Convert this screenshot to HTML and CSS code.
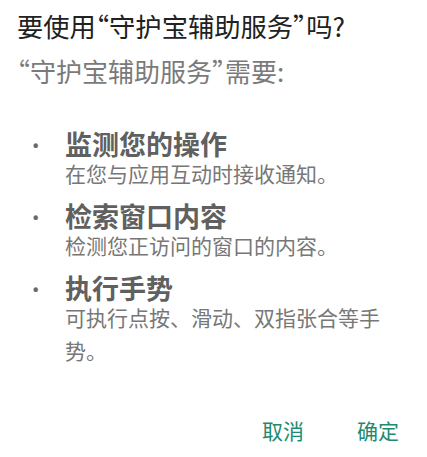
FILE: index.html
```html
<!DOCTYPE html>
<html lang="zh-CN">
<head>
<meta charset="utf-8">
<link rel="stylesheet" href="styles.css">
</head>
<body>
<div class="dialog">
  <h1 class="title">要使用“守护宝辅助服务”吗?</h1>
  <p class="subtitle">“守护宝辅助服务”需要:</p>
  <ul class="perms">
    <li class="perm">
      <span class="dot">•</span>
      <div class="perm-text">
        <div class="perm-head">监测您的操作</div>
        <div class="perm-desc">在您与应用互动时接收通知。</div>
      </div>
    </li>
    <li class="perm">
      <span class="dot">•</span>
      <div class="perm-text">
        <div class="perm-head">检索窗口内容</div>
        <div class="perm-desc">检测您正访问的窗口的内容。</div>
      </div>
    </li>
    <li class="perm">
      <span class="dot">•</span>
      <div class="perm-text">
        <div class="perm-head">执行手势</div>
        <div class="perm-desc">可执行点按、滑动、双指张合等手势。</div>
      </div>
    </li>
  </ul>
  <div class="actions">
    <button class="btn">取消</button>
    <button class="btn">确定</button>
  </div>
</div>
</body>
</html>
```

FILE: styles.css
```css
html, body {
  margin: 0;
  padding: 0;
  background: #ffffff;
}
body {
  font-family: "Noto Sans CJK SC", sans-serif;
  width: 427px;
  height: 457px;
  overflow: hidden;
}
.dialog {
  padding: 9px 37px 0 17px;
  display: flex;
  flex-direction: column;
}
.title {
  margin: 0;
  font-size: 26.3px;
  line-height: 34px;
  font-weight: 400;
  color: #212121;
  white-space: nowrap;
  font-feature-settings: "halt" 1;
}
.subtitle {
  margin: 13px 0 0;
  font-size: 26px;
  line-height: 30px;
  color: #7a7a7a;
  white-space: nowrap;
  font-feature-settings: "halt" 1;
}
.perms {
  list-style: none;
  margin: 47.5px 0 0;
  padding: 0;
  display: flex;
  flex-direction: column;
  gap: 14px;
}
.perm {
  display: flex;
}
.dot {
  width: 48px;
  flex: none;
  padding-left: 15px;
  box-sizing: border-box;
  font-family: Roboto, sans-serif;
  font-size: 22px;
  line-height: 25px;
  color: #6a6a6a;
}
.perm-text {
  flex: 1;
  min-width: 0;
  font-family: Roboto, "Noto Sans CJK SC", sans-serif;
}
.perm-head {
  font-size: 27px;
  line-height: 25px;
  font-weight: 700;
  color: #606060;
}
.perm-desc {
  font-size: 21px;
  line-height: 33px;
  color: #777777;
}
.actions {
  margin: 49.5px -9px 0 0;
  display: flex;
  justify-content: flex-end;
  gap: 53px;
}
.btn {
  border: 0;
  background: none;
  padding: 0;
  font-family: inherit;
  font-size: 21px;
  line-height: 24px;
  color: #1e8a70;
}
```
